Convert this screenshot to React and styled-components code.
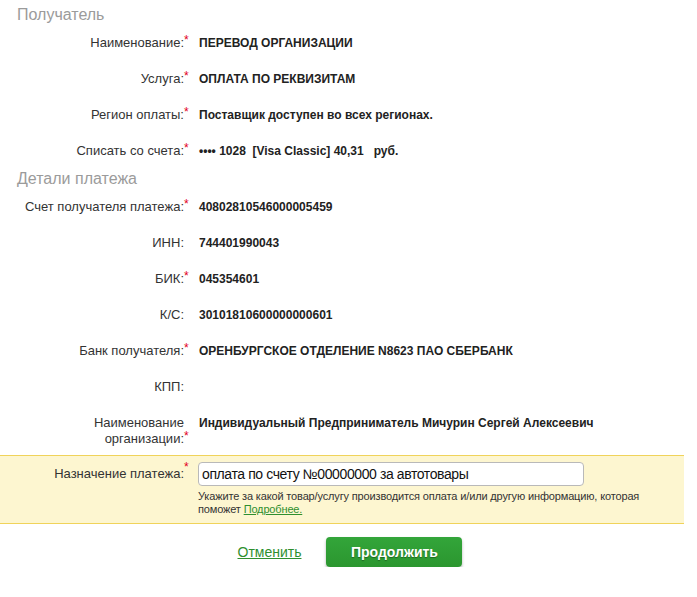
import React from "react";
import styled, { createGlobalStyle } from "styled-components";

const GlobalStyle = createGlobalStyle`
  html, body {
    margin: 0;
    padding: 0;
    background: #ffffff;
    font-family: "Liberation Sans", Arial, sans-serif;
  }
`;

const recipient = [
  { label: "Наименование:", value: "ПЕРЕВОД ОРГАНИЗАЦИИ", required: true },
  { label: "Услуга:", value: "ОПЛАТА ПО РЕКВИЗИТАМ", required: true },
  { label: "Регион оплаты:", value: "Поставщик доступен во всех регионах.", required: true },
  { label: "Списать со счета:", value: "•••• 1028  [Visa Classic] 40,31   руб.", required: true },
];

const details = [
  { label: "Счет получателя платежа:", value: "40802810546000005459", required: true },
  { label: "ИНН:", value: "744401990043" },
  { label: "БИК:", value: "045354601", required: true },
  { label: "К/С:", value: "30101810600000000601" },
  { label: "Банк получателя:", value: "ОРЕНБУРГСКОЕ ОТДЕЛЕНИЕ N8623 ПАО СБЕРБАНК", required: true },
  { label: "КПП:", value: "" },
  { label: "Наименование организации:", value: "Индивидуальный Предприниматель Мичурин Сергей Алексеевич", required: true },
];

const Field = ({ label, value, required }) => (
  <Row>
    <Label>
      {label}
      {required && <Star>*</Star>}
    </Label>
    <Value>{value}</Value>
  </Row>
);

const App = () => (
  <>
    <GlobalStyle />
    <Page>
      <Heading>Получатель</Heading>
      {recipient.map((f) => (
        <Field key={f.label} {...f} />
      ))}

      <Heading>Детали платежа</Heading>
      {details.map((f) => (
        <Field key={f.label} {...f} />
      ))}

      <Highlight>
        <Label>
          Назначение платежа:<Star>*</Star>
        </Label>
        <InputColumn>
          <Input defaultValue="оплата по счету №00000000 за автотовары" />
          <Hint>
            Укажите за какой товар/услугу производится оплата и/или другую информацию, которая
            поможет <HintLink href="#">Подробнее.</HintLink>
          </Hint>
        </InputColumn>
      </Highlight>

      <Actions>
        <CancelLink href="#">Отменить</CancelLink>
        <Button type="button">Продолжить</Button>
      </Actions>
    </Page>
  </>
);

export default App;

/* ================= STYLES ================= */

const Page = styled.div`
  width: 684px;
  padding-top: 5px;
`;

const Heading = styled.div`
  padding-left: 17px;
  font-size: 16px;
  line-height: 20px;
  color: #9b9b9b;
`;

const Row = styled.div`
  display: flex;
  align-items: flex-start;
  padding: 10px 0;
  line-height: 16px;
`;

const Label = styled.div`
  flex: 0 0 168px;
  width: 168px;
  margin-left: 16px;
  text-align: right;
  font-size: 13px;
  color: #333333;
`;

const Star = styled.span`
  display: inline-block;
  width: 7px;
  margin-right: -7px;
  text-align: left;
  color: #e2001a;
  font-size: 12px;
  vertical-align: top;
  line-height: 11px;
`;

const Value = styled.div`
  flex: 1;
  padding-left: 15px;
  font-size: 12px;
  font-weight: bold;
  color: #222222;
  white-space: pre-wrap;
`;

const Highlight = styled.div`
  display: flex;
  align-items: flex-start;
  margin-top: -2px;
  padding: 6px 0 7px;
  background: #fdf6d0;
  border-top: 1px solid #f0d35a;
  border-bottom: 1px solid #f0d35a;

  ${Label} {
    line-height: 24px;
  }
`;

const InputColumn = styled.div`
  flex: 1;
  padding-left: 14px;
`;

const Input = styled.input`
  box-sizing: border-box;
  display: block;
  width: 386px;
  height: 24px;
  padding: 0 3px;
  border: 1px solid #b9b9b9;
  border-radius: 4px;
  background: #ffffff;
  font-family: "Liberation Sans", Arial, sans-serif;
  font-size: 14px;
  letter-spacing: -0.4px;
  color: #111111;
  outline: none;
`;

const Hint = styled.div`
  margin-top: 4px;
  font-size: 11px;
  line-height: 13px;
  letter-spacing: -0.15px;
  color: #333333;
`;

const HintLink = styled.a`
  color: #2f8f2f;
  text-decoration: underline;
`;

const Actions = styled.div`
  display: flex;
  align-items: center;
  justify-content: center;
  gap: 25px;
  padding: 13px 0 0 16px;
`;

const CancelLink = styled.a`
  font-size: 14px;
  color: #2f8f2f;
  text-decoration: underline;
`;

const Button = styled.button`
  width: 136px;
  height: 30px;
  border: none;
  border-radius: 4px;
  background: linear-gradient(#33a53a, #2b962f);
  box-shadow: 0 2px 3px rgba(0, 0, 0, 0.3);
  font-family: "Liberation Sans", Arial, sans-serif;
  font-size: 14px;
  font-weight: bold;
  color: #ffffff;
  text-shadow: 0 1px 1px rgba(0, 0, 0, 0.35);
  cursor: pointer;
`;
